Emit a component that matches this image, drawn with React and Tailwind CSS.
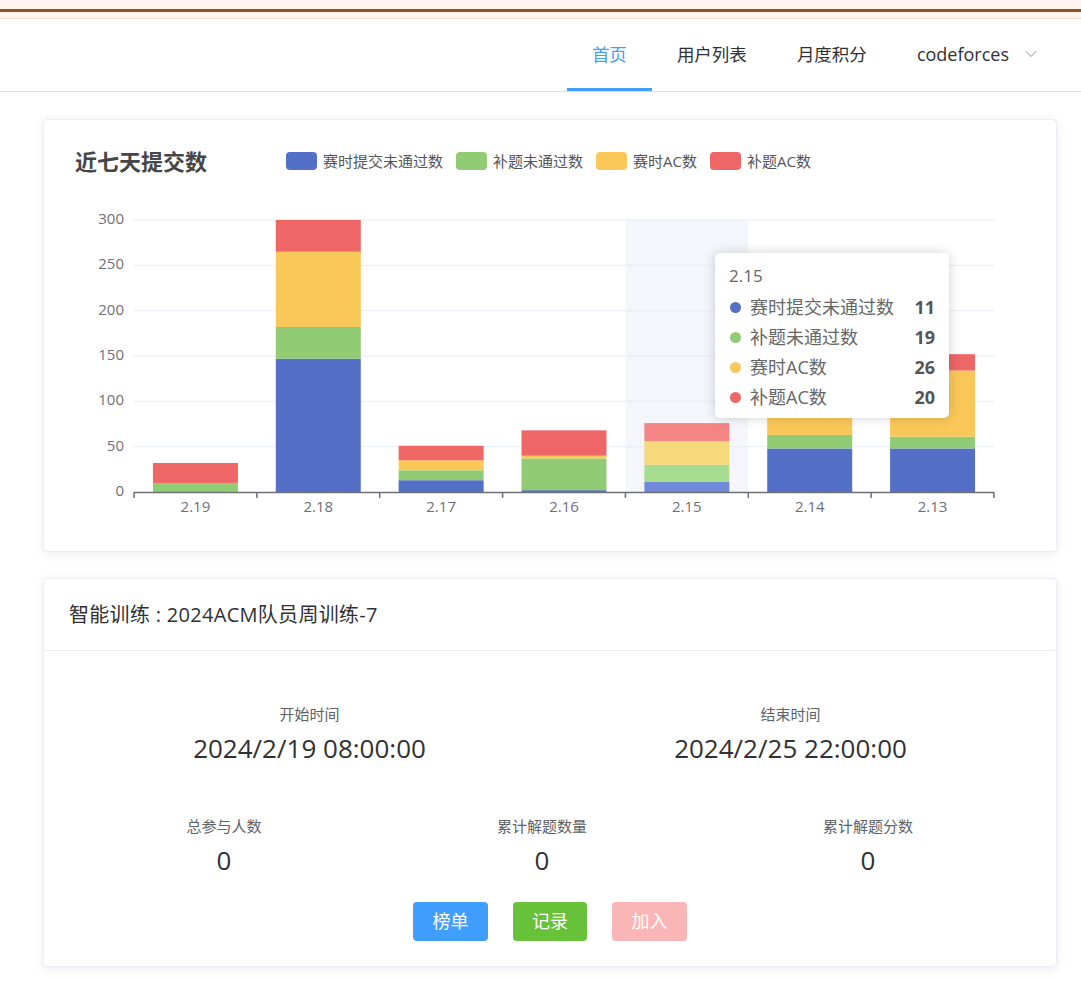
import { ChevronDown } from 'lucide-react';

const FONT = "'Open Sans','Noto Sans CJK SC',sans-serif";

const series = [
    { name: '赛时提交未通过数', color: '#5470c6', light: '#7089d9' },
    { name: '补题未通过数', color: '#91cc75', light: '#a7dd91' },
    { name: '赛时AC数', color: '#fac858', light: '#f5d97b' },
    { name: '补题AC数', color: '#ee6666', light: '#f48585' },
];

// [blue, green, yellow, red]
const days = [
    { label: '2.19', v: [0, 10, 0, 22] },
    { label: '2.18', v: [147, 35, 83, 35] },
    { label: '2.17', v: [13, 11, 11, 16] },
    { label: '2.16', v: [2, 35, 3, 28] },
    { label: '2.15', v: [11, 19, 26, 20] },
    { label: '2.14', v: [48, 15, 40, 20] },
    { label: '2.13', v: [48, 13, 73, 18] },
];

const LEFT = 90;
const RIGHT = 950;
const BASE = 297;
const K = 272 / 300;
const CAT = (RIGHT - LEFT) / 7;
const BAR = 85;
const HOVER = 4;

function Chart() {
    return (
        <svg width="1012" height="340" className="block mt-[21px]">
            <rect x={LEFT + CAT * HOVER} y={BASE - 300 * K} width={CAT} height={300 * K} fill="#f4f6fb" />
            {[50, 100, 150, 200, 250, 300].map((t) => (
                <line key={t} x1={LEFT} x2={RIGHT} y1={BASE - t * K} y2={BASE - t * K} stroke="#e6ebf5" strokeWidth="1" />
            ))}
            {[0, 50, 100, 150, 200, 250, 300].map((t) => (
                <text key={t} x="80" y={BASE - t * K} textAnchor="end" dominantBaseline="middle" fontSize="15" fill="#6e7079" fontFamily={FONT}>
                    {t}
                </text>
            ))}
            {days.map((d, i) => {
                const x = LEFT + CAT * i + (CAT - BAR) / 2;
                let acc = 0;
                return (
                    <g key={d.label}>
                        {d.v.map((val, s) => {
                            const y1 = BASE - acc * K;
                            acc += val;
                            const y2 = BASE - acc * K;
                            if (val === 0) return null;
                            return (
                                <rect key={s} x={x} y={y2} width={BAR} height={y1 - y2} fill={i === HOVER ? series[s].light : series[s].color} />
                            );
                        })}
                        <text x={LEFT + CAT * (i + 0.5)} y="313" textAnchor="middle" dominantBaseline="middle" fontSize="15" fill="#6e7079" fontFamily={FONT}>
                            {d.label}
                        </text>
                    </g>
                );
            })}
            <line x1={LEFT} x2={RIGHT} y1={BASE + 0.5} y2={BASE + 0.5} stroke="#6e7079" strokeWidth="1.5" />
            {Array.from({ length: 8 }).map((_, i) => (
                <line key={i} x1={LEFT + CAT * i} x2={LEFT + CAT * i} y1={BASE} y2={BASE + 6} stroke="#6e7079" strokeWidth="1.5" />
            ))}
        </svg>
    );
}

function Tooltip() {
    const d = days[HOVER];
    return (
        <div className="absolute left-[671px] top-[133px] w-[234px] h-[165px] bg-white rounded-[5px] shadow-[0_0_12px_rgba(0,0,0,0.18)] px-[14px] pt-[9px]">
            <div className="text-[17px] leading-[28px] text-[#666]">{d.label}</div>
            <div className="mt-[2px] flex flex-col">
                {series.map((s, i) => (
                    <div key={s.name} className="flex items-center h-[30px]">
                        <span className="w-[11px] h-[11px] rounded-full mr-[9px] ml-px" style={{ backgroundColor: s.color }} />
                        <span className="text-[18px] text-[#666]">{s.name}</span>
                        <span className="ml-auto text-[18px] font-bold text-[#555]">{d.v[i]}</span>
                    </div>
                ))}
            </div>
        </div>
    );
}

function Stat({ label, value }) {
    return (
        <div className="flex flex-col items-center">
            <div className="text-[15px] leading-[22px] text-[#606266]">{label}</div>
            <div className="mt-[5px] text-[26px] leading-[36px] text-[#303133]">{value}</div>
        </div>
    );
}

export default function App() {
    const navItems = ['首页', '用户列表', '月度积分'];

    return (
        <div className="min-h-[981px] bg-white font-['Open_Sans','Noto_Sans_CJK_SC',sans-serif]">
            {/* top strip */}
            <div className="h-[9px] bg-[#fff5f0]" />
            <div className="h-[3px] bg-[#8f5225]" />
            <div className="h-[6px] bg-[#fff5f0]" />
            <div className="h-px bg-[#f6dccb]" />

            {/* nav */}
            <div className="h-[73px] border-b border-[#dcdfe6] flex justify-end pr-[15px]">
                {navItems.map((item, i) => (
                    <div
                        key={item}
                        className={
                            i === 0
                                ? 'px-[25px] flex items-center text-[17.5px] text-[#409eff] border-b-[3px] border-[#409eff] pt-[1px]'
                                : 'px-[25px] flex items-center text-[17.5px] text-[#303133] pb-[2px]'
                        }
                    >
                        {item}
                    </div>
                ))}
                <div className="px-[25px] flex items-center text-[18px] text-[#303133] pb-[2px]">
                    codeforces
                    <ChevronDown size={20} strokeWidth={1.2} className="ml-[12px] text-[#909399]" />
                </div>
            </div>

            {/* chart card */}
            <div className="relative ml-[43px] mt-[27px] w-[1014px] h-[433px] bg-white border border-[#ebeef5] rounded-[4px] shadow-[0_2px_12px_rgba(0,0,0,0.08)]">
                <div className="flex items-center h-[26px] mt-[28px]">
                    <div className="w-[242px] pl-[31px] text-[22px] font-bold text-[#464646]">近七天提交数</div>
                    <div className="flex items-center gap-[13px]">
                        {series.map((s) => (
                            <div key={s.name} className="flex items-center gap-[6px]">
                                <span className="w-[31px] h-[18px] rounded-[4px]" style={{ backgroundColor: s.color }} />
                                <span className="text-[15px] text-[#555]">{s.name}</span>
                            </div>
                        ))}
                    </div>
                </div>
                <Chart />
                <Tooltip />
            </div>

            {/* training card */}
            <div className="ml-[43px] mt-[26px] w-[1014px] bg-white border border-[#ebeef5] rounded-[4px] shadow-[0_2px_12px_rgba(0,0,0,0.08)]">
                <div className="h-[72px] px-[25px] flex items-center border-b border-[#ebeef5] text-[20px] text-[#303133] tracking-[0.3px]">
                    智能训练 : 2024ACM队员周训练-7
                </div>
                <div className="px-[25px] pt-[52px] pb-[25px]">
                    <div className="grid grid-cols-2">
                        <Stat label="开始时间" value="2024/2/19 08:00:00" />
                        <Stat label="结束时间" value="2024/2/25 22:00:00" />
                    </div>
                    <div className="grid grid-cols-[310px_326px_326px] mt-[49px]">
                        <Stat label="总参与人数" value="0" />
                        <Stat label="累计解题数量" value="0" />
                        <Stat label="累计解题分数" value="0" />
                    </div>
                    <div className="flex justify-center gap-[25px] mt-[24px]">
                        <button className="w-[75px] h-[39px] rounded-[4px] bg-[#409eff] text-white text-[18px]">榜单</button>
                        <button className="w-[74px] h-[39px] rounded-[4px] bg-[#67c23a] text-white text-[18px]">记录</button>
                        <button className="w-[75px] h-[39px] rounded-[4px] bg-[#fab6b6] text-white text-[18px]">加入</button>
                    </div>
                </div>
            </div>
        </div>
    );
}
